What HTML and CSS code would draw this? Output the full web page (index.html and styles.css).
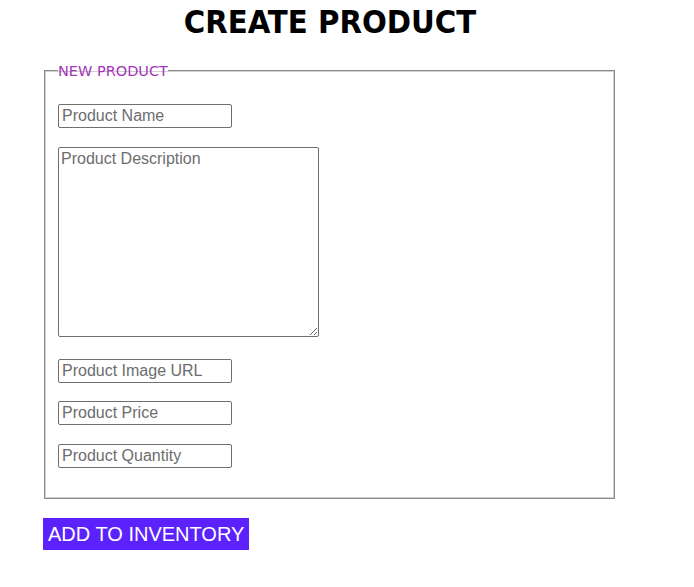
FILE: index.html
```html
<!DOCTYPE html>
<html>
<head>
<meta charset="utf-8">
<link rel="stylesheet" href="styles.css">
</head>
<body>
<div class="page">
  <h1 class="title">CREATE PRODUCT</h1>
  <form class="form">
    <fieldset class="box">
      <legend class="legend">NEW PRODUCT</legend>
      <div class="fields">
        <input class="field field-first" type="text" placeholder="Product Name">
        <textarea class="area" placeholder="Product Description"></textarea>
        <input class="field" type="text" placeholder="Product Image URL">
        <input class="field field-price" type="text" placeholder="Product Price">
        <input class="field" type="text" placeholder="Product Quantity">
      </div>
    </fieldset>
    <button class="submit" type="button">ADD TO INVENTORY</button>
  </form>
</div>
</body>
</html>
```
FILE: styles.css
```css
html, body {
  margin: 0;
  padding: 0;
  background: #ffffff;
}
.page {
  width: 644px;
  padding-left: 8px;
}
.title {
  margin: 3px 0 0;
  text-align: center;
  font-family: "DejaVu Sans Condensed", "DejaVu Sans", Verdana, sans-serif;
  font-stretch: condensed;
  font-weight: bold;
  font-size: 32.5px;
  line-height: 38px;
  color: #000;
}
.form {
  margin: 19px 0 0 36px;
}
.box {
  width: 571px;
  box-sizing: border-box;
  margin: 0;
  padding: 0 13px 30px 12px;
  border: 1px solid #8a8a8a;
  box-shadow: inset 0 0 0 1px #d0d0d0;
}
.legend {
  padding: 2px 0 0;
  margin-left: 1px;
  font-family: "DejaVu Sans", Verdana, sans-serif;
  font-size: 14.5px;
  color: #a435b8;
  line-height: 18px;
}
.fields {
  display: flex;
  flex-direction: column;
  align-items: flex-start;
  gap: 18px;
  padding-top: 24px;
  padding-left: 1px;
}
.field, .area {
  font-family: "Liberation Sans", Arial, sans-serif;
  font-size: 16px;
  color: #222;
  border: 1px solid #6f6f6f;
  border-radius: 2px;
  box-sizing: border-box;
  margin: 0;
  background: #fff;
}
.field {
  width: 174px;
  height: 24px;
  padding: 1px 3px;
}
.field-first {
  margin-bottom: 1px;
}
.field-price {
  margin-bottom: 1px;
}
.area {
  width: 261px;
  height: 190px;
  padding: 2px 2px;
  margin-bottom: 4px;
}
.field::placeholder, .area::placeholder {
  color: #6d6d6d;
  opacity: 1;
}
.submit {
  display: block;
  margin: 19px 0 0 -1px;
  height: 32px;
  padding: 0 5px;
  border: none;
  background: #5b22fe;
  color: #ffffff;
  font-family: "Liberation Sans", Arial, sans-serif;
  font-size: 20px;
  line-height: 32px;
}
```
